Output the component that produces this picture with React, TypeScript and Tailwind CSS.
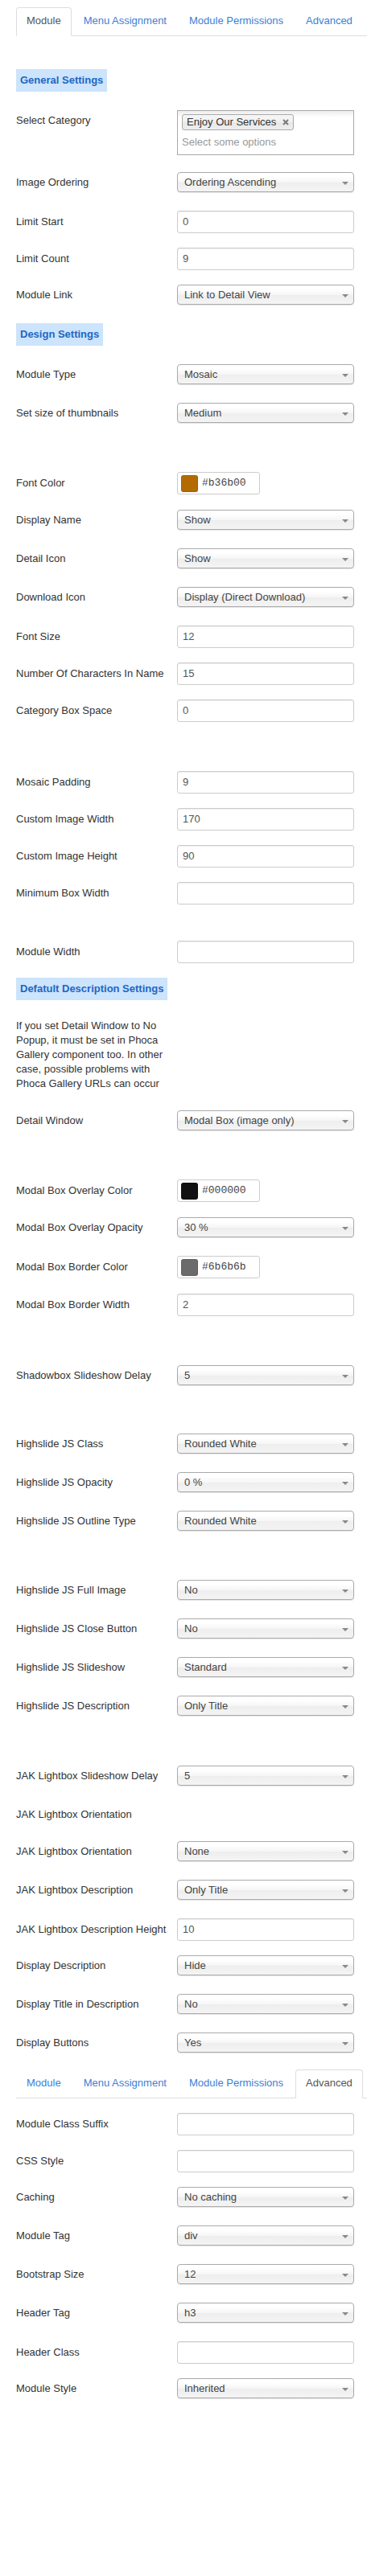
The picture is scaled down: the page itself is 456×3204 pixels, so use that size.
import React from "react";

const TABS = ["Module", "Menu Assignment", "Module Permissions", "Advanced"];

function Tabs({ active, className = "" }: { active: string; className?: string }) {
  return (
    <div className={`flex w-[436px] border-b border-[#dddddd] ${className}`}>
      {TABS.map((t) =>
        t === active ? (
          <div
            key={t}
            className="mr-[2px] -mb-px px-[12px] pt-[7px] pb-[9px] leading-[18px] border border-[#dddddd] border-b-white rounded-t-[4px] bg-white text-[#555555] whitespace-nowrap"
          >
            {t}
          </div>
        ) : (
          <div
            key={t}
            className="mr-[2px] -mb-px px-[12px] pt-[7px] pb-[9px] leading-[18px] border border-transparent text-[#3b7fd6] whitespace-nowrap"
          >
            {t}
          </div>
        )
      )}
    </div>
  );
}

function Label({ children }: { children: React.ReactNode }) {
  return <div className="w-[200px] shrink-0 whitespace-nowrap text-[#333333]">{children}</div>;
}

function Header({ text, className = "" }: { text: string; className?: string }) {
  return (
    <div className={`mb-[23px] ${className}`}>
      <span className="inline-block h-[28px] leading-[28px] px-[5px] bg-[#cce4fc] text-[#2166c4] font-bold">
        {text}
      </span>
    </div>
  );
}

function SelectRow({ label, value, className = "" }: { label: string; value: string; className?: string }) {
  return (
    <div className={`flex items-center h-[25px] mb-[23px] ${className}`}>
      <Label>{label}</Label>
      <div className="w-[220px] h-[25px] flex items-center border border-[#aaaaaa] rounded-[4px] bg-[linear-gradient(#ffffff_20%,#f6f6f6_50%,#eeeeee_52%,#f4f4f4_100%)] shadow-[0_1px_1px_rgba(0,0,0,0.1)] pl-[8px] pr-[6px] text-[#444444]">
        <span className="flex-1 whitespace-nowrap">{value}</span>
        <span className="mt-[3px] w-0 h-0 border-x-[4px] border-x-transparent border-t-[4px] border-t-[#888888]" />
      </div>
    </div>
  );
}

function InputRow({ label, value, className = "" }: { label: string; value: string; className?: string }) {
  return (
    <div className={`flex items-center mb-[18px] ${className}`}>
      <Label>{label}</Label>
      <div className="w-[220px] h-[28px] flex items-center border border-[#cccccc] rounded-[3px] bg-white shadow-[inset_0_1px_1px_rgba(0,0,0,0.075)] pl-[6px] text-[#555555]">
        {value}
      </div>
    </div>
  );
}

function ColorRow({
  label,
  value,
  swatch,
  className = "",
}: {
  label: string;
  value: string;
  swatch: string;
  className?: string;
}) {
  return (
    <div className={`flex items-center mb-[19px] ${className}`}>
      <Label>{label}</Label>
      <div className="w-[103px] h-[28px] flex items-center border border-[#cccccc] rounded-[3px] bg-white pl-[4px]">
        <span className={`w-[21px] h-[21px] rounded-[3px] border border-black/10 ${swatch}`} />
        <span className="ml-[5px] font-['Liberation_Mono','DejaVu_Sans_Mono',monospace] text-[13px] text-[#444444]">
          {value}
        </span>
      </div>
    </div>
  );
}

export default function App() {
  return (
    <div className="w-[456px] bg-white pl-[20px] pt-[9px] pb-[16px] font-['Liberation_Sans',Arial,sans-serif] text-[13px] leading-[18px] text-[#333333]">
      <Tabs active="Module" />

      <Header text="General Settings" className="mt-[41px]" />

      <div className="flex items-start mb-[21px]">
        <div className="w-[200px] shrink-0 pt-[4px]">Select Category</div>
        <div className="w-[220px] h-[56px] border border-[#aaaaaa] bg-[linear-gradient(#eeeeee_1%,#ffffff_15%)] px-[5px] pt-[4px]">
          <div className="inline-flex items-center h-[20px] border border-[#aaaaaa] rounded-[3px] bg-[linear-gradient(#f4f4f4_20%,#f0f0f0_50%,#e8e8e8_52%,#eeeeee_100%)] pl-[5px] pr-[5px] text-[#333333]">
            <span>Enjoy Our Services</span>
            <svg className="ml-[8px]" width="8" height="8" viewBox="0 0 8 8">
              <path d="M1 1 L7 7 M7 1 L1 7" stroke="#7a7a7a" strokeWidth="2" strokeLinecap="butt" />
            </svg>
          </div>
          <div className="mt-[4px] h-[22px] leading-[22px] text-[#999999]">Select some options</div>
        </div>
      </div>

      <SelectRow label="Image Ordering" value="Ordering Ascending" />
      <InputRow label="Limit Start" value="0" />
      <InputRow label="Limit Count" value="9" />
      <SelectRow label="Module Link" value="Link to Detail View" />

      <Header text="Design Settings" className="mt-[10px]" />

      <SelectRow label="Module Type" value="Mosaic" />
      <SelectRow label="Set size of thumbnails" value="Medium" />

      <ColorRow label="Font Color" value="#b36b00" swatch="bg-[#b36b00]" className="mt-[61px]" />
      <SelectRow label="Display Name" value="Show" />
      <SelectRow label="Detail Icon" value="Show" className="mt-[3px]" />
      <SelectRow label="Download Icon" value="Display (Direct Download)" />
      <InputRow label="Font Size" value="12" />
      <InputRow label="Number Of Characters In Name" value="15" />
      <InputRow label="Category Box Space" value="0" />

      <InputRow label="Mosaic Padding" value="9" className="mt-[61px]" />
      <InputRow label="Custom Image Width" value="170" />
      <InputRow label="Custom Image Height" value="90" />
      <InputRow label="Minimum Box Width" value="" />

      <InputRow label="Module Width" value="" className="mt-[45px]" />

      <Header text="Defatult Description Settings" className="mt-[10px]" />

      <p className="w-[190px] mt-[4px] mb-[24px] leading-[18px] text-[#333333]">
        If you set Detail Window to No Popup, it must be set in Phoca Gallery component too. In other case, possible
        problems with Phoca Gallery URLs can occur
      </p>

      <SelectRow label="Detail Window" value="Modal Box (image only)" />

      <ColorRow label="Modal Box Overlay Color" value="#000000" swatch="bg-[#111111]" className="mt-[61px]" />
      <SelectRow label="Modal Box Overlay Opacity" value="30 %" />
      <ColorRow label="Modal Box Border Color" value="#6b6b6b" swatch="bg-[#6b6b6b]" />
      <InputRow label="Modal Box Border Width" value="2" className="mt-[4px]" />

      <SelectRow label="Shadowbox Slideshow Delay" value="5" className="mt-[61px]" />

      <SelectRow label="Highslide JS Class" value="Rounded White" className="mt-[60px]" />
      <SelectRow label="Highslide JS Opacity" value="0 %" />
      <SelectRow label="Highslide JS Outline Type" value="Rounded White" />

      <SelectRow label="Highslide JS Full Image" value="No" className="mt-[61px]" />
      <SelectRow label="Highslide JS Close Button" value="No" />
      <SelectRow label="Highslide JS Slideshow" value="Standard" />
      <SelectRow label="Highslide JS Description" value="Only Title" />

      <SelectRow label="JAK Lightbox Slideshow Delay" value="5" className="mt-[62px]" />
      <div className="flex items-center h-[25px] mb-[21px]">
        <Label>JAK Lightbox Orientation</Label>
      </div>
      <SelectRow label="JAK Lightbox Orientation" value="None" />
      <SelectRow label="JAK Lightbox Description" value="Only Title" />
      <InputRow label="JAK Lightbox Description Height" value="10" />
      <SelectRow label="Display Description" value="Hide" />
      <SelectRow label="Display Title in Description" value="No" />
      <SelectRow label="Display Buttons" value="Yes" />

      <Tabs active="Advanced" className="-mt-[2px]" />

      <InputRow label="Module Class Suffix" value="" className="mt-[18px]" />
      <InputRow label="CSS Style" value="" />
      <SelectRow label="Caching" value="No caching" />
      <SelectRow label="Module Tag" value="div" />
      <SelectRow label="Bootstrap Size" value="12" />
      <SelectRow label="Header Tag" value="h3" />
      <InputRow label="Header Class" value="" />
      <SelectRow label="Module Style" value="Inherited" className="mb-0" />
    </div>
  );
}
